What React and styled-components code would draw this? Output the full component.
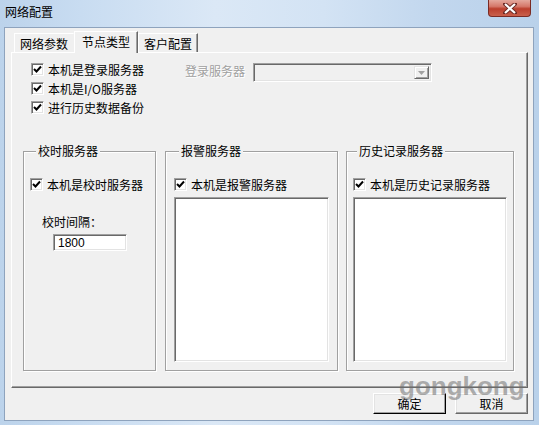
import React from "react";
import styled, { createGlobalStyle } from "styled-components";

const GlobalStyle = createGlobalStyle`
  html, body {
    margin: 0;
    padding: 0;
  }
  body {
    width: 539px;
    height: 425px;
    overflow: hidden;
    background: #c4d8ee;
    font-family: "Noto Sans CJK SC", "Liberation Sans", sans-serif;
    font-size: 12px;
    color: #000;
  }
`;

const Window = styled.div`
  position: relative;
  width: 539px;
  height: 425px;
  display: flex;
  flex-direction: column;
  background: linear-gradient(
    90deg,
    #bcd3eb 0%,
    #c8dcf1 15%,
    #dbe8f6 40%,
    #d3e3f4 60%,
    #c2d7ee 80%,
    #b9d1ea 100%
  );
`;

const TitleBar = styled.div`
  height: 27px;
  flex-shrink: 0;
  display: flex;
  justify-content: space-between;
  align-items: flex-start;
`;

const Title = styled.span`
  padding: 5px 0 0 5px;
  line-height: 14px;
  color: #000;
`;

const CloseButton = styled.div`
  width: 43px;
  height: 17px;
  margin-right: 8px;
  box-sizing: border-box;
  border: 1px solid #7a2b24;
  border-top: none;
  border-radius: 0 0 4px 4px;
  background: linear-gradient(#e4a89d 0%, #d5786a 40%, #bb3f2d 55%, #c9604c 100%);
  display: flex;
  align-items: center;
  justify-content: center;
`;

const Client = styled.div`
  flex: 1;
  margin: 0 5px 4px 4px;
  padding: 3px 5px 6px 6px;
  background: #f0f0f0;
  border: 1px solid #8ea3bd;
  display: flex;
  flex-direction: column;
`;

const TabStrip = styled.div`
  height: 21px;
  display: flex;
  align-items: flex-end;
  padding-left: 3px;
  position: relative;
  z-index: 1;
`;

const Tab = styled.div`
  box-sizing: border-box;
  height: ${(p) => (p.$active ? "22px" : "19px")};
  margin-bottom: ${(p) => (p.$active ? "-1px" : "0")};
  padding: ${(p) => (p.$active ? "3px 7px 0 7px" : "3px 5px 0 5px")};
  line-height: 14px;
  background: #f0f0f0;
  border-top: 1px solid #fff;
  border-left: 1px solid #fff;
  border-right: 1px solid ${(p) => (p.$dark ? "#696969" : "transparent")};
  box-shadow: ${(p) => (p.$dark ? "inset -1px 0 0 #a0a0a0" : "none")};
  white-space: nowrap;
`;

const Panel = styled.div`
  height: 336px;
  box-sizing: border-box;
  border-top: 1px solid #fff;
  border-left: 1px solid #fff;
  border-right: 1px solid #696969;
  border-bottom: 1px solid #696969;
  box-shadow: inset -1px -1px 0 #a0a0a0;
  padding: 7px 13px 0 11px;
  display: flex;
  flex-direction: column;
`;

const TopSection = styled.div`
  display: flex;
  align-items: flex-start;
  padding-left: 8px;
`;

const Options = styled.div`
  width: 154px;
  display: flex;
  flex-direction: column;
`;

const CheckRow = styled.label`
  height: 19px;
  display: flex;
  align-items: center;
  gap: 4px;
  line-height: 14px;
  white-space: nowrap;
`;

const Box = styled.span`
  width: 13px;
  height: 13px;
  box-sizing: border-box;
  flex-shrink: 0;
  background: #fff;
  border-top: 1px solid #a0a0a0;
  border-left: 1px solid #a0a0a0;
  border-right: 1px solid #fff;
  border-bottom: 1px solid #fff;
  box-shadow: inset 1px 1px 0 #696969, inset -1px -1px 0 #e3e3e3;
  display: flex;
  align-items: center;
  justify-content: center;
`;

const ServerPick = styled.div`
  display: flex;
  align-items: flex-start;
  gap: 8px;
  margin-top: 3px;
`;

const DimLabel = styled.span`
  line-height: 14px;
  padding-top: 1px;
  color: #a0a0a0;
  text-shadow: 1px 1px 0 #fff;
`;

const Sunken = styled.div`
  box-sizing: border-box;
  background: ${(p) => (p.$disabled ? "#f0f0f0" : "#fff")};
  border-top: 1px solid #a0a0a0;
  border-left: 1px solid #a0a0a0;
  border-right: 1px solid #fff;
  border-bottom: 1px solid #fff;
  box-shadow: inset 1px 1px 0 #696969, inset -1px -1px 0 #e3e3e3;
`;

const Combo = styled(Sunken)`
  width: 179px;
  height: 19px;
  display: flex;
  justify-content: flex-end;
  padding: 2px;
`;

const DropButton = styled.div`
  width: 15px;
  box-sizing: border-box;
  background: #f0f0f0;
  border-top: 1px solid #e3e3e3;
  border-left: 1px solid #e3e3e3;
  border-right: 1px solid #696969;
  border-bottom: 1px solid #696969;
  box-shadow: inset 1px 1px 0 #fff, inset -1px -1px 0 #a0a0a0;
  display: flex;
  align-items: center;
  justify-content: center;
`;

const Groups = styled.div`
  margin-top: 27px;
  height: 227px;
  display: flex;
`;

const Group = styled.fieldset`
  box-sizing: border-box;
  width: ${(p) => p.$w}px;
  margin: 0 0 0 ${(p) => p.$gap}px;
  padding: 17px ${(p) => p.$pad}px 8px ${(p) => p.$pad}px;
  border: 1px solid #a0a0a0;
  box-shadow: inset 1px 1px 0 #fff, 1px 1px 0 #fff;
  display: flex;
  flex-direction: column;
  min-width: 0;
`;

const Legend = styled.legend`
  margin-left: ${(p) => p.$offset}px;
  padding: 0 2px;
  line-height: 14px;
  background: #f0f0f0;
`;

const FieldLabel = styled.div`
  margin: 21px 0 0 12px;
  line-height: 14px;
`;

const NumberInput = styled(Sunken)`
  width: 74px;
  height: 17px;
  margin: 5px 0 0 23px;
  padding: 2px 0 0 4px;
  font-family: "Liberation Sans", sans-serif;
  font-size: 12px;
  line-height: 13px;
`;

const ListBox = styled(Sunken)`
  flex: 1;
  margin-top: 3px;
`;

const ButtonRow = styled.div`
  margin-top: 5px;
  display: flex;
  justify-content: flex-end;
  gap: 9px;
`;

const Button = styled.div`
  width: 73px;
  height: 21px;
  box-sizing: border-box;
  background: #f0f0f0;
  border-top: 1px solid #fff;
  border-left: 1px solid #fff;
  border-right: 1px solid ${(p) => (p.$default ? "#000" : "#696969")};
  border-bottom: 1px solid ${(p) => (p.$default ? "#000" : "#696969")};
  box-shadow: inset -1px -1px 0 #a0a0a0, inset 1px 1px 0 #e3e3e3;
  display: flex;
  align-items: center;
  justify-content: center;
  line-height: 14px;
`;

const Watermark = styled.div`
  position: absolute;
  left: 399px;
  top: 376px;
  font-family: "Liberation Sans", sans-serif;
  font-weight: bold;
  font-size: 26px;
  line-height: 20px;
  color: rgba(110, 110, 110, 0.55);
  pointer-events: none;
`;

const Check = () => (
  <svg width="9" height="9" viewBox="0 0 9 9">
    <path d="M1 4 L3.5 6.5 L8 1.5" fill="none" stroke="#000" strokeWidth="2" />
  </svg>
);

const CheckBox = ({ children }) => (
  <CheckRow>
    <Box>
      <Check />
    </Box>
    {children}
  </CheckRow>
);

export default function App() {
  return (
    <Window>
      <GlobalStyle />
      <TitleBar>
        <Title>网络配置</Title>
        <CloseButton>
          <svg width="14" height="11" viewBox="0 0 14 11">
            <path
              d="M2 1 L12 10 M12 1 L2 10"
              stroke="#6b2a25"
              strokeWidth="4"
              strokeLinecap="round"
            />
            <path d="M2 1 L12 10 M12 1 L2 10" stroke="#fff" strokeWidth="2.2" />
          </svg>
        </CloseButton>
      </TitleBar>

      <Client>
        <TabStrip>
          <Tab>网络参数</Tab>
          <Tab $active $dark>
            节点类型
          </Tab>
          <Tab $dark>客户配置</Tab>
        </TabStrip>

        <Panel>
          <TopSection>
            <Options>
              <CheckBox>本机是登录服务器</CheckBox>
              <CheckBox>本机是I/O服务器</CheckBox>
              <CheckBox>进行历史数据备份</CheckBox>
            </Options>
            <ServerPick>
              <DimLabel>登录服务器</DimLabel>
              <Combo $disabled>
                <DropButton>
                  <svg width="7" height="4" viewBox="0 0 7 4">
                    <path d="M0 0 H7 L3.5 4 Z" fill="#a0a0a0" />
                  </svg>
                </DropButton>
              </Combo>
            </ServerPick>
          </TopSection>

          <Groups>
            <Group $w={133} $gap={0} $pad={6}>
              <Legend $offset={6}>校时服务器</Legend>
              <CheckBox>本机是校时服务器</CheckBox>
              <FieldLabel>校时间隔：</FieldLabel>
              <NumberInput>1800</NumberInput>
            </Group>
            <Group $w={173} $gap={9} $pad={8}>
              <Legend $offset={5}>报警服务器</Legend>
              <CheckBox>本机是报警服务器</CheckBox>
              <ListBox />
            </Group>
            <Group $w={168} $gap={8} $pad={6}>
              <Legend $offset={4}>历史记录服务器</Legend>
              <CheckBox>本机是历史记录服务器</CheckBox>
              <ListBox />
            </Group>
          </Groups>
        </Panel>

        <ButtonRow>
          <Button $default>确定</Button>
          <Button>取消</Button>
        </ButtonRow>
      </Client>

      <Watermark>gongkong</Watermark>
    </Window>
  );
}
